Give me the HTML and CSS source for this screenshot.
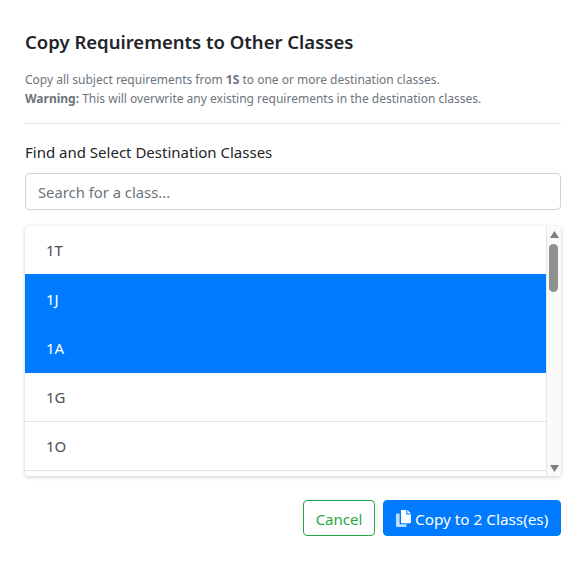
FILE: index.html
```html
<!DOCTYPE html>
<html lang="en">
<head>
<meta charset="UTF-8" />
<meta name="viewport" content="width=device-width, initial-scale=1.0">
<title>Copy Requirements</title>
<link rel="stylesheet" href="styles.css">
</head>
<body>

<main class="modal">
  <h1 class="modal-title">Copy Requirements to Other Classes</h1>
  <p class="modal-text">
    Copy all subject requirements from <strong>1S</strong> to one or more destination classes.<br>
    <strong>Warning:</strong> This will overwrite any existing requirements in the destination classes.
  </p>
  <hr class="divider">

  <label class="field-label" for="classSearch">Find and Select Destination Classes</label>
  <input class="search" id="classSearch" type="text" placeholder="Search for a class...">

  <!-- class list with its scrollbar -->
  <div class="list-box">
    <ul class="class-list">
      <li>1T</li>
      <li class="selected">1J</li>
      <li class="selected">1A</li>
      <li>1G</li>
      <li>1O</li>
    </ul>
    <div class="scrollbar" aria-hidden="true">
      <svg class="arrow" viewBox="0 0 9 7" width="9" height="7"><path d="M4.5 0 L9 7 L0 7 Z"/></svg>
      <div class="track"><div class="thumb"></div></div>
      <svg class="arrow" viewBox="0 0 9 7" width="9" height="7"><path d="M0 0 L9 0 L4.5 7 Z"/></svg>
    </div>
  </div>

  <div class="actions">
    <button class="btn btn-cancel" type="button">Cancel</button>
    <button class="btn btn-copy" type="button">
      <svg class="copy-icon" viewBox="0 0 15 17" width="15" height="17">
        <path d="M3.6 3.4 H1.1 A1.1 1.1 0 0 0 0 4.5 V15.9 A1.1 1.1 0 0 0 1.1 17 H9.4 A1.1 1.1 0 0 0 10.5 15.9 V14.2 H4.8 A1.2 1.2 0 0 1 3.6 13 Z" opacity="0.75"/>
        <path d="M5 0 H10.3 V4.4 H15 V12.2 A1 1 0 0 1 14 13.2 H6 A1 1 0 0 1 5 12.2 Z"/>
        <path d="M11.3 0 L15 3.4 H11.3 Z"/>
      </svg>
      <span>Copy to 2 Class(es)</span>
    </button>
  </div>
</main>

</body>
</html>
```

FILE: styles.css
```css
/* Base styles */
body {
  font-family: "Noto Sans", "Open Sans", sans-serif;
  margin: 0;
  background: #fff;
  color: #212529;
}

.modal {
  display: flex;
  flex-direction: column;
  padding: 30px 26px 27px 25px;
}

.modal-title {
  margin: 0 0 16px;
  font-size: 18.5px;
  line-height: 24px;
  font-weight: 600;
}

.modal-text {
  margin: 0;
  font-size: 12px;
  line-height: 19px;
  color: #6c757d;
}

.divider {
  width: 100%;
  margin: 15px 0 16px;
  border: 0;
  border-top: 1px solid #dee2e6;
}

.field-label {
  margin-bottom: 9px;
  font-size: 15px;
  line-height: 24px;
}

.search {
  box-sizing: border-box;
  width: 100%;
  height: 37px;
  padding: 6px 12px;
  border: 1px solid #ced4da;
  border-radius: 4px;
  font: inherit;
  font-size: 14.8px;
}

.search::placeholder {
  color: #6c757d;
  opacity: 1;
}

/* Class list */
.list-box {
  display: flex;
  height: 250px;
  margin-top: 16px;
  overflow: hidden;
  border-radius: 4px;
  box-shadow: 0 1px 4px rgba(0,0,0,0.2);
}

.class-list {
  flex: 1;
  margin: 0;
  padding: 0;
  list-style: none;
}

.class-list li {
  box-sizing: border-box;
  height: 49px;
  padding: 0 21px;
  border-bottom: 1px solid #dee2e6;
  font-size: 15px;
  line-height: 48px;
  color: #495057;
}

.class-list li.selected {
  background: #007bff;
  border-bottom-color: #007bff;
  box-shadow: 0 -1px 0 #007bff;
  color: #fff;
}

.scrollbar {
  display: flex;
  flex-direction: column;
  align-items: center;
  width: 15px;
  padding: 5px 0 4px;
  box-sizing: border-box;
  background: #fafafa;
  border-left: 1px solid #e6e6e6;
  fill: #7f7f7f;
}

.track {
  flex: 1;
  width: 100%;
  padding: 6px 0 0 2px;
  box-sizing: border-box;
}

.thumb {
  width: 9px;
  height: 48px;
  border-radius: 5px;
  background: #8f8f8f;
}

/* Buttons */
.actions {
  display: flex;
  justify-content: flex-end;
  gap: 8px;
  margin-top: 24px;
}

.btn {
  height: 36px;
  padding: 1px 12px 0;
  border-radius: 4px;
  font: inherit;
  font-size: 15px;
}

.btn-cancel {
  width: 72px;
  padding: 1px 0 0;
  background: #fff;
  border: 1px solid #28a745;
  color: #28a745;
}

.btn-copy {
  display: flex;
  align-items: center;
  gap: 4px;
  width: 178px;
  padding: 1px 0 0 12px;
  background: #007bff;
  border: 1px solid #007bff;
  color: #fff;
  font-size: 15.3px;
}

.copy-icon {
  fill: #fff;
}
```
